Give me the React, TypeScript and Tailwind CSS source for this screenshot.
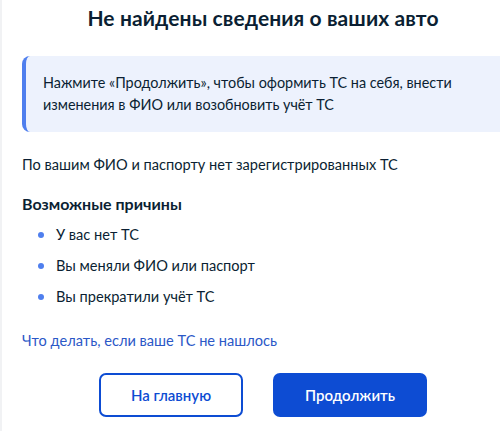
const reasons = ["У вас нет ТС", "Вы меняли ФИО или паспорт", "Вы прекратили учёт ТС"];

export default function App() {
  return (
    <div
      className="w-[500px] h-[431px] overflow-hidden bg-white text-[#0b1f33] border-l-2 border-[#f1f2f4]"
      style={{ fontFamily: "Lato, 'Noto Sans', sans-serif" }}
    >
      <div className="ml-[20px] w-[482px] pt-[5px]">
        <h1 className="text-center text-[21px] leading-[26px] font-bold tracking-[0.1px]">
          Не найдены сведения о ваших авто
        </h1>

        {/* инфо-блок */}
        <div className="mt-[25px] h-[76px] flex items-center rounded-l-[8px] border-l-[4px] border-[#4f7fee] bg-[#edf2fd] pl-[17px] pr-4">
          <p className="text-[14.4px] leading-[22px]">
            Нажмите «Продолжить», чтобы оформить ТС на себя, внести
            <br />
            изменения в ФИО или возобновить учёт ТС
          </p>
        </div>

        <p className="mt-[22px] text-[14.6px] leading-[22px]">
          По вашим ФИО и паспорту нет зарегистрированных ТС
        </p>

        <h2 className="mt-[17px] text-[16px] leading-[22px] font-bold">Возможные причины</h2>
        <ul className="mt-[9px] flex flex-col gap-[9px]">
          {reasons.map((r) => (
            <li key={r} className="flex items-center h-[22px] text-[14.6px]">
              <span className="ml-[16px] mr-[12px] h-[6px] w-[6px] rounded-full bg-[#4f7fee]" />
              {r}
            </li>
          ))}
        </ul>

        <a className="mt-[22px] block text-[14.6px] leading-[22px] text-[#2b58c7]">
          Что делать, если ваше ТС не нашлось
        </a>

        <div className="mt-[21px] flex justify-center gap-[30px]">
          <button className="h-[44px] w-[144px] rounded-[7px] border-2 border-[#0d4cd3] bg-white text-[15px] font-semibold text-[#0d4cd3]">
            На главную
          </button>
          <button className="h-[44px] w-[154px] rounded-[7px] bg-[#0d4cd3] text-[15px] font-semibold text-white">
            Продолжить
          </button>
        </div>
      </div>
    </div>
  );
}
